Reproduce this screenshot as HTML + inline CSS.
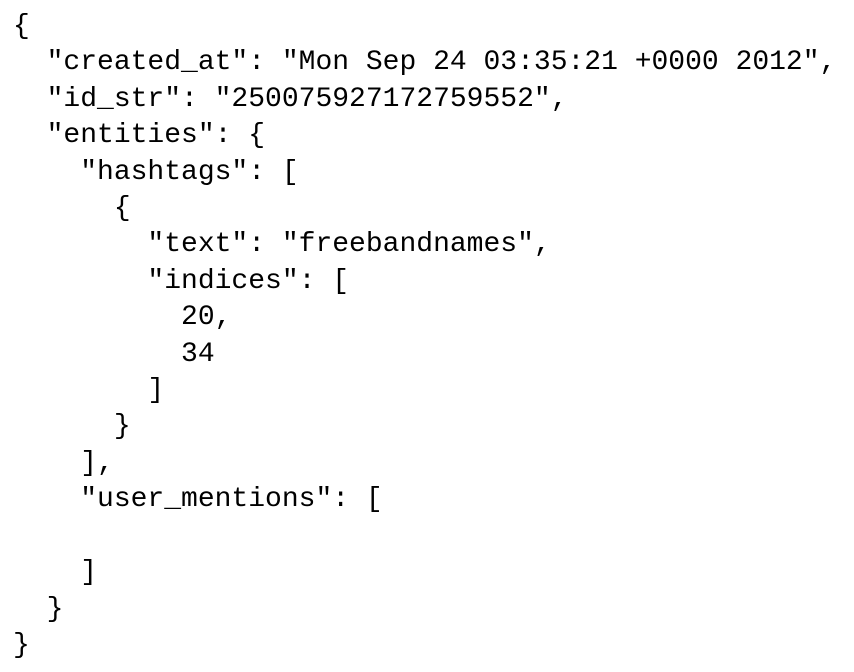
<!DOCTYPE html>
<html><head><style>
html,body{margin:0;padding:0;background:#fff;width:854px;height:672px;overflow:hidden}
pre{margin:0;position:absolute;left:13px;top:9px;font-family:"Liberation Mono",monospace;font-size:28px;line-height:36.4px;color:#000}
</style></head><body>
<pre>{
  "created_at": "Mon Sep 24 03:35:21 +0000 2012",
  "id_str": "250075927172759552",
  "entities": {
    "hashtags": [
      {
        "text": "freebandnames",
        "indices": [
          20,
          34
        ]
      }
    ],
    "user_mentions": [

    ]
  }
}</pre>
</body></html>
